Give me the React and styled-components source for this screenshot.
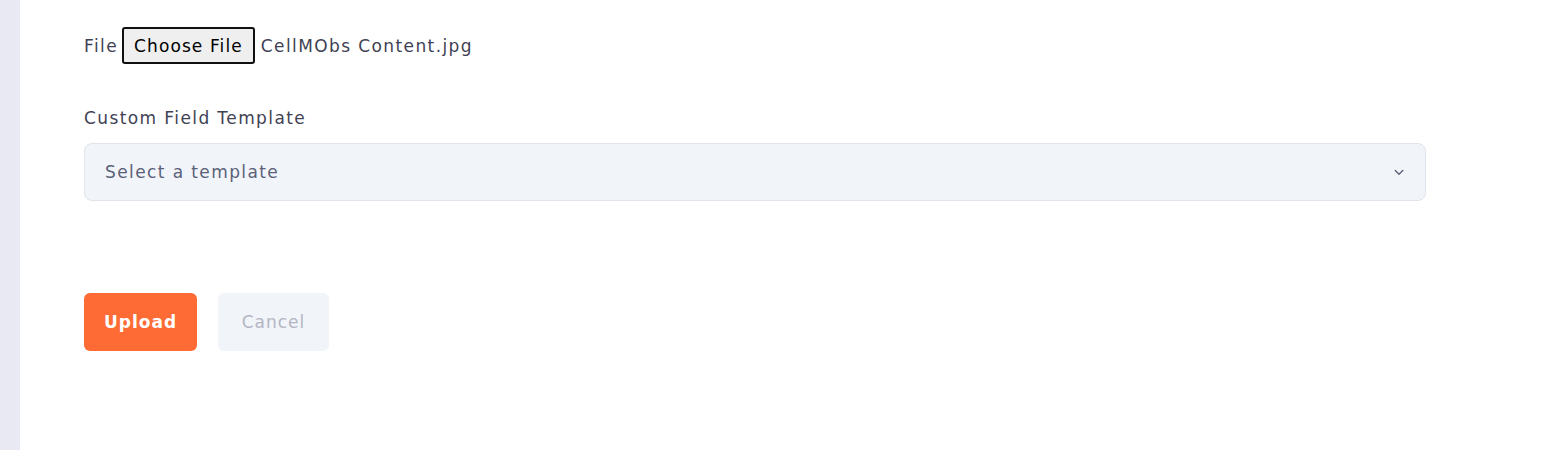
import React from "react";
import styled, { createGlobalStyle } from "styled-components";

const GlobalStyle = createGlobalStyle`
  html, body {
    margin: 0;
    padding: 0;
    background: #ffffff;
  }
  body {
    font-family: "DejaVu Sans", "Noto Sans", sans-serif;
    letter-spacing: 1.4px;
  }
`;

const Page = styled.div`
  display: flex;
  min-height: 450px;
`;

const SideStrip = styled.div`
  width: 20px;
  flex-shrink: 0;
  background: #e9e9f4;
`;

const Content = styled.div`
  flex: 1;
  padding: 27px 0 0 64px;
`;

const Form = styled.form`
  width: 1342px;
  display: flex;
  flex-direction: column;
`;

const FileRow = styled.div`
  display: flex;
  align-items: center;
  height: 37px;
  font-size: 17px;
  color: #3f4254;
`;

const FileLabel = styled.span`
  margin-right: 4px;
`;

const ChooseButton = styled.button`
  height: 37px;
  box-sizing: border-box;
  border: 2px solid #101010;
  border-radius: 3px;
  background: #efefef;
  color: #000;
  font-family: inherit;
  font-size: 17px;
  letter-spacing: 1.1px;
  padding: 0 10px;
  margin-right: 6px;
  cursor: pointer;
`;

const FileName = styled.span`
  color: #3f4254;
`;

const Field = styled.div`
  margin-top: 42px;
  display: flex;
  flex-direction: column;
`;

const Label = styled.label`
  font-size: 17px;
  color: #3f4254;
  line-height: 24px;
  margin-bottom: 13px;
`;

const SelectBox = styled.div`
  position: relative;
  height: 58px;
  box-sizing: border-box;
  border: 1px solid #e1e4ea;
  border-radius: 8px;
  background: #f1f4f8;
  display: flex;
  align-items: center;
  justify-content: space-between;
  padding: 0 17px 0 20px;
  font-size: 17px;
  color: #5b6178;
  cursor: pointer;
`;

const Actions = styled.div`
  margin-top: 92px;
  display: flex;
  gap: 21px;
`;

const Button = styled.button`
  height: 58px;
  border: none;
  border-radius: 6px;
  font-family: inherit;
  font-size: 17px;
  letter-spacing: 1px;
  font-weight: ${(p) => (p.$primary ? 600 : 400)};
  padding: 0;
  width: ${(p) => p.$width}px;
  background: ${(p) => (p.$primary ? "#ff6b35" : "#f1f4f8")};
  color: ${(p) => (p.$primary ? "#ffffff" : "#b4b6c4")};
  cursor: pointer;
`;

const Chevron = () => (
  <svg width="18" height="18" viewBox="0 0 24 24" fill="none" stroke="#5b6178" strokeWidth="1.8" strokeLinecap="round" strokeLinejoin="round">
    <path d="M7 10l5 5 5-5" />
  </svg>
);

export default function App() {
  return (
    <>
      <GlobalStyle />
      <Page>
        <SideStrip />
        <Content>
          <Form onSubmit={(e) => e.preventDefault()}>
            <FileRow>
              <FileLabel>File</FileLabel>
              <ChooseButton type="button">Choose File</ChooseButton>
              <FileName>CellMObs Content.jpg</FileName>
            </FileRow>
            <Field>
              <Label>Custom Field Template</Label>
              <SelectBox>
                <span>Select a template</span>
                <Chevron />
              </SelectBox>
            </Field>
            <Actions>
              <Button type="submit" $primary $width={113}>Upload</Button>
              <Button type="button" $width={111}>Cancel</Button>
            </Actions>
          </Form>
        </Content>
      </Page>
    </>
  );
}
